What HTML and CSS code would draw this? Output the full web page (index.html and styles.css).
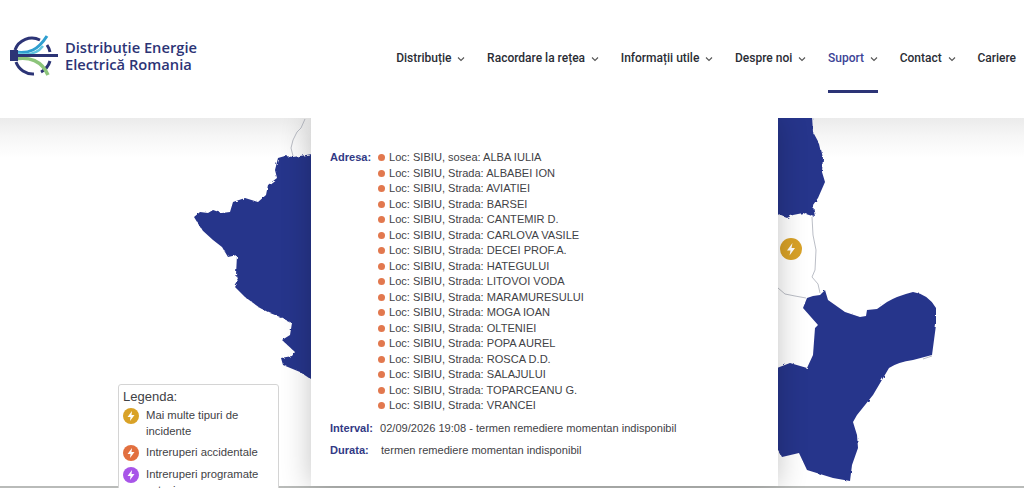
FILE: index.html
```html
<!DOCTYPE html>
<html lang="ro">
<head>
<meta charset="utf-8">
<title>Distribuție Energie Electrică Romania</title>
<link rel="stylesheet" href="styles.css">
</head>
<body>
<div class="page">
  <header class="site-header">
    <a class="brand" href="#">
      <svg class="brand-mark" viewBox="0 0 50 42" width="50" height="42" aria-hidden="true">
        <path class="ring" d="M6 15A18 18 0 0 1 31 5"/>
        <path class="ring" d="M38 10A18 18 0 0 1 41 17"/>
        <path class="ring" d="M41 26A18 18 0 0 1 32 37"/>
        <path class="ring" d="M7 27A18 18 0 0 0 25 39"/>
        <path d="M6 17C20 19 29 15 38 1" fill="none" stroke="#2f9fd0" stroke-width="3"/>
        <path d="M6 18C18 21 28 19 34 11" fill="none" stroke="#62c6df" stroke-width="2.500"/>
        <path d="M6 24C20 21 33 26 39 40" fill="none" stroke="#8cc47a" stroke-width="3.500"/>
        <rect x="1" y="15" width="8" height="11" fill="#2c3476"/>
        <rect x="6" y="19" width="43" height="3" fill="#2c3476"/>
      </svg>
      <span class="brand-name">Distribuție Energie<br>Electrică Romania</span>
    </a>
    <nav class="main-nav">
      <a class="nav-item" href="#">Distribuție <svg class="chev" viewBox="0 0 8 6" width="8" height="6"><path d="M1 1.500l3 3 3-3"/></svg></a>
      <a class="nav-item" href="#">Racordare la rețea <svg class="chev" viewBox="0 0 8 6" width="8" height="6"><path d="M1 1.500l3 3 3-3"/></svg></a>
      <a class="nav-item" href="#">Informații utile <svg class="chev" viewBox="0 0 8 6" width="8" height="6"><path d="M1 1.500l3 3 3-3"/></svg></a>
      <a class="nav-item" href="#">Despre noi <svg class="chev" viewBox="0 0 8 6" width="8" height="6"><path d="M1 1.500l3 3 3-3"/></svg></a>
      <a class="nav-item is-active" href="#">Suport <svg class="chev" viewBox="0 0 8 6" width="8" height="6"><path d="M1 1.500l3 3 3-3"/></svg></a>
      <a class="nav-item" href="#">Contact <svg class="chev" viewBox="0 0 8 6" width="8" height="6"><path d="M1 1.500l3 3 3-3"/></svg></a>
      <a class="nav-item" href="#">Cariere</a>
    </nav>
  </header>

  <main class="map-area">
    <svg class="map" viewBox="0 118 1024 370" width="1024" height="370" aria-hidden="true">
      <defs>
        <filter id="rough" x="-5%" y="-5%" width="110%" height="110%">
          <feTurbulence type="fractalNoise" baseFrequency="0.22" numOctaves="2" seed="4"/>
          <feDisplacementMap in="SourceGraphic" scale="3.500"/>
        </filter>
        <filter id="rough-soft" x="-5%" y="-5%" width="110%" height="110%">
          <feTurbulence type="fractalNoise" baseFrequency="0.18" numOctaves="2" seed="9"/>
          <feDisplacementMap in="SourceGraphic" scale="2"/>
        </filter>
      </defs>
      <g class="county-line">
        <path d="M305 119L301 128L297 132L293 140L291 148L293 156"/>
        <path d="M812 217L813 235L816 250L815 270L812 277L818 284L820 293"/>
        <path d="M778 288L785 294L795 296L806 298"/>
        <path d="M923 359L932 356"/>
      </g>
      <path class="county" filter="url(#rough)" d="M312 154L300 156L293 157L285 156L278 158L275 170L277 178L268 185L266 195L258 202L245 198L233 202L230 212L222 213L213 210L208 213L200 212L194 217L202 230L213 240L222 247L228 257L237 255L236 275L238 282L235 287L245 297L260 308L270 313L280 317L292 323L290 335L282 340L295 352L292 356L281 358L283 365L300 372L312 380Z"/>
      <path class="county" filter="url(#rough)" d="M777 116L812 116L813 132L820 145L823 158L822 172L825 182L818 198L813 205L815 217L803 213L793 215L787 218L777 214Z"/>
      <path class="county" filter="url(#rough-soft)" d="M807 298L813 296L820 295L825 290L828 300L845 312L860 317L866 316L867 310L877 309L887 302Q897 296 913 292Q928 294 936 308L936 325L932 355L913 360Q898 362 889 368L873 395L857 415L853 422L857 435L858 448L852 465L850 481L833 478L807 470L799 453L782 457L777 448L777 368L790 363L807 368L813 355L815 328L818 325L803 308Z"/>
      <circle cx="791" cy="249" r="11" fill="#d9a227"/>
      <path d="M792.500 243L787 250.500H790.500L789.500 255.500L795 248H791.500Z" fill="#fff"/>
    </svg>

    <section class="outage-panel">
      <div class="field">
        <span class="field-label">Adresa:</span>
        <ul class="streets">
          <li>Loc: SIBIU, sosea: ALBA IULIA</li>
          <li>Loc: SIBIU, Strada: ALBABEI ION</li>
          <li>Loc: SIBIU, Strada: AVIATIEI</li>
          <li>Loc: SIBIU, Strada: BARSEI</li>
          <li>Loc: SIBIU, Strada: CANTEMIR D.</li>
          <li>Loc: SIBIU, Strada: CARLOVA VASILE</li>
          <li>Loc: SIBIU, Strada: DECEI PROF.A.</li>
          <li>Loc: SIBIU, Strada: HATEGULUI</li>
          <li>Loc: SIBIU, Strada: LITOVOI VODA</li>
          <li>Loc: SIBIU, Strada: MARAMURESULUI</li>
          <li>Loc: SIBIU, Strada: MOGA IOAN</li>
          <li>Loc: SIBIU, Strada: OLTENIEI</li>
          <li>Loc: SIBIU, Strada: POPA AUREL</li>
          <li>Loc: SIBIU, Strada: ROSCA D.D.</li>
          <li>Loc: SIBIU, Strada: SALAJULUI</li>
          <li>Loc: SIBIU, Strada: TOPARCEANU G.</li>
          <li>Loc: SIBIU, Strada: VRANCEI</li>
        </ul>
      </div>
      <div class="field field-interval">
        <span class="field-label">Interval:</span>
        <span class="field-value">02/09/2026 19:08 - termen remediere momentan indisponibil</span>
      </div>
      <div class="field field-duration">
        <span class="field-label">Durata:</span>
        <span class="field-value">termen remediere momentan indisponibil</span>
      </div>
    </section>

    <aside class="legend">
      <h2 class="legend-title">Legenda:</h2>
      <div class="legend-row">
        <svg class="legend-icon" viewBox="0 0 16 16" width="16" height="16"><circle cx="8" cy="8" r="8" fill="#d9a227"/><path d="M9 3L4.500 9H7.500L7 13L11.500 7H8.500Z" fill="#fff"/></svg>
        <span>Mai multe tipuri de incidente</span>
      </div>
      <div class="legend-row">
        <svg class="legend-icon" viewBox="0 0 16 16" width="16" height="16"><circle cx="8" cy="8" r="8" fill="#e2703f"/><path d="M9 3L4.500 9H7.500L7 13L11.500 7H8.500Z" fill="#fff"/></svg>
        <span>Intreruperi accidentale</span>
      </div>
      <div class="legend-row">
        <svg class="legend-icon" viewBox="0 0 16 16" width="16" height="16"><circle cx="8" cy="8" r="8" fill="#a855e8"/><path d="M9 3L4.500 9H7.500L7 13L11.500 7H8.500Z" fill="#fff"/></svg>
        <span>Intreruperi programate<br>astazi</span>
      </div>
    </aside>
  </main>
</div>
</body>
</html>
```
FILE: styles.css
```css
* { box-sizing: border-box; }
html, body { margin: 0; padding: 0; background: #fff; }
.page {
  width: 1024px;
  height: 488px;
  overflow: hidden;
  display: flex;
  flex-direction: column;
  filter: blur(0.35px);
}
.site-header {
  position: relative;
  z-index: 2;
  flex: 0 0 118px;
  display: flex;
  justify-content: space-between;
  align-items: flex-start;
  background: #fff;
  padding-left: 9px;
  padding-right: 8px;
}
.brand {
  display: flex;
  align-items: center;
  gap: 6px;
  margin-top: 35px;
  text-decoration: none;
}
.ring {
  fill: none;
  stroke: #2c3476;
  stroke-width: 3;
}
.brand-name {
  font: 600 14.700px/17px "Open Sans", sans-serif;
  color: #2c3476;
}
.main-nav {
  display: flex;
  gap: 21.700px;
}
.nav-item {
  height: 93px;
  padding-top: 51px;
  font: 500 12px/15px Roboto, sans-serif;
  color: #2a2d35;
  text-decoration: none;
  white-space: nowrap;
}
.nav-item.is-active {
  color: #3c4496;
  border-bottom: 3px solid #2c3476;
}
.chev {
  margin-left: 3px;
  vertical-align: 0;
}
.chev path {
  fill: none;
  stroke: #555;
  stroke-width: 1.100;
}
.map-area {
  position: relative;
  flex: 1;
  min-height: 0;
  display: flex;
  padding-left: 311px;
  background: linear-gradient(#ebebeb 0, #f6f6f6 18px, #fff 40px);
  border-bottom: 2px solid #b9bbb9;
}
.map {
  position: absolute;
  left: 0;
  top: 0;
}
.county { fill: #27348b; }
.county-line {
  fill: none;
  stroke: #a9adb8;
  stroke-width: 0.800;
}
.outage-panel {
  position: relative;
  width: 467px;
  background: #fff;
  padding: 32px 19px 0;
  box-shadow: 0 0 28px rgba(0, 0, 0, 0.24);
  font: 11.070px/15.500px "Liberation Sans", sans-serif;
  color: #3f4246;
}
.field { display: flex; }
.field-label {
  flex: 0 0 48px;
  font-weight: 700;
  color: #323a85;
}
.streets {
  list-style: none;
  margin: 0;
  padding: 0;
}
.streets li {
  display: flex;
  align-items: center;
  gap: 4px;
  white-space: nowrap;
}
.streets li::before {
  content: "";
  width: 7px;
  height: 7px;
  border-radius: 50%;
  background: #e2784e;
}
.field-interval { margin-top: 7px; }
.field-interval .field-label { flex-basis: 50px; }
.field-duration { margin-top: 7px; }
.field-duration .field-label { flex-basis: 51px; }
.legend {
  position: absolute;
  left: 118px;
  top: 266px;
  width: 161px;
  height: 130px;
  padding: 4px;
  background: #fff;
  border: 1px solid #d4d4d4;
  border-radius: 3px;
  font: 11.300px/15.500px "Liberation Sans", sans-serif;
  color: #3f4246;
}
.legend-title {
  margin: 0 0 3px;
  font: 400 13px/16px "Liberation Sans", sans-serif;
}
.legend-row {
  display: flex;
  align-items: flex-start;
  gap: 7px;
  margin-bottom: 6px;
}
.legend-icon { flex: none; }
```
